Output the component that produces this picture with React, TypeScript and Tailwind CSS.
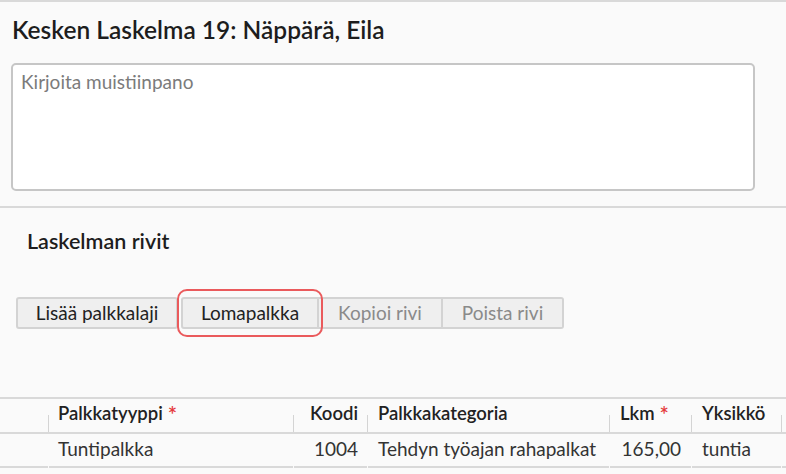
import React from "react";

const headCell = "relative flex items-start pt-[2px] h-[33px] text-[18.5px] leading-[24px] font-semibold text-[#222]";
const bodyCell = "flex items-start pt-[3px] h-[34px] border-b-2 border-[#d9d9d9] text-[19px] leading-[24px] text-[#333]";
const btn = "h-[32px] border-2 border-[#d3d3d3] bg-[#efefef] text-[19px] flex items-center justify-center";

function Sep() {
  return <span className="absolute left-[-1px] bottom-0 h-[17px] w-px bg-[#d4d4d4]" />;
}

function Req() {
  return <span className="relative top-[2px] ml-[5px] text-[22px] leading-[24px] text-[#e5393b] font-semibold">*</span>;
}

export default function App() {
  return (
    <div className="w-[786px] h-[474px] overflow-hidden bg-[#fafafa] border-t-2 border-[#d9d9d9] font-['Lato','Noto_Sans',sans-serif]">
      <div className="pl-[12px] pt-[14px] text-[24.5px] leading-[28px] font-semibold text-[#1d1d1d]">
        Kesken Laskelma 19: Näppärä, Eila
      </div>
      <div className="pl-[11px] mt-[19px]">
        <textarea
          placeholder="Kirjoita muistiinpano"
          className="block w-[744px] h-[128px] resize-none rounded-[5px] border-2 border-[#c6c6c6] bg-white px-[8px] pt-[5px] text-[19px] leading-[24px] text-[#222] placeholder:text-[#7b7b7b] outline-none"
        />
      </div>
      <div className="mt-[15px] border-t-2 border-[#d9d9d9]">
        <div className="pl-[27px] pt-[19px] text-[21.5px] leading-[28px] font-semibold text-[#1d1d1d]">
          Laskelman rivit
        </div>
        <div className="mt-[42px] pl-[16px] flex items-center h-[32px]">
          <button className={`${btn} w-[162px] rounded-[3px] text-[#222]`}>Lisää palkkalaji</button>
          <div className="relative ml-[3px]">
            <button className={`${btn} w-[138px] rounded-l-[3px] border-[#d0d0d0] text-[#222]`}>Lomapalkka</button>
            <span className="pointer-events-none absolute -left-[4px] -right-[4px] -top-[8px] -bottom-[8px] rounded-[10px] border-2 border-[#ea5a5c]" />
          </div>
          <button disabled className={`${btn} w-[124px] border-l-0 text-[#8a8a8a]`}>
            Kopioi rivi
          </button>
          <button disabled className={`${btn} w-[121px] rounded-r-[3px] border-l-0 text-[#8a8a8a]`}>
            Poista rivi
          </button>
        </div>
        <div className="mt-[68px] border-t-2 border-[#d9d9d9]">
          <div className="flex gap-px border-b-2 border-[#d9d9d9]">
            <div className={`${headCell} w-[48px]`} />
            <div className={`${headCell} w-[244px] pl-[9px]`}>
              <Sep />
              Palkkatyyppi<Req />
            </div>
            <div className={`${headCell} w-[73px] justify-end pr-[9px]`}>
              <Sep />
              Koodi
            </div>
            <div className={`${headCell} w-[241px] pl-[10px]`}>
              <Sep />
              Palkkakategoria
            </div>
            <div className={`${headCell} w-[81px] pl-[10px]`}>
              <Sep />
              Lkm<Req />
            </div>
            <div className={`${headCell} w-[89px] pl-[10px]`}>
              <Sep />
              Yksikkö
            </div>
            <div className={`${headCell} flex-1`}>
              <Sep />
            </div>
          </div>
          <div className="flex gap-px">
            <div className={`${bodyCell} w-[48px]`} />
            <div className={`${bodyCell} w-[244px] pl-[9px]`}>Tuntipalkka</div>
            <div className={`${bodyCell} w-[73px] justify-end pr-[9px]`}>1004</div>
            <div className={`${bodyCell} w-[241px] pl-[10px]`}>Tehdyn työajan rahapalkat</div>
            <div className={`${bodyCell} w-[81px] justify-end pr-[10px]`}>165,00</div>
            <div className={`${bodyCell} w-[89px] pl-[10px]`}>tuntia</div>
            <div className={`${bodyCell} flex-1`} />
          </div>
        </div>
      </div>
    </div>
  );
}
